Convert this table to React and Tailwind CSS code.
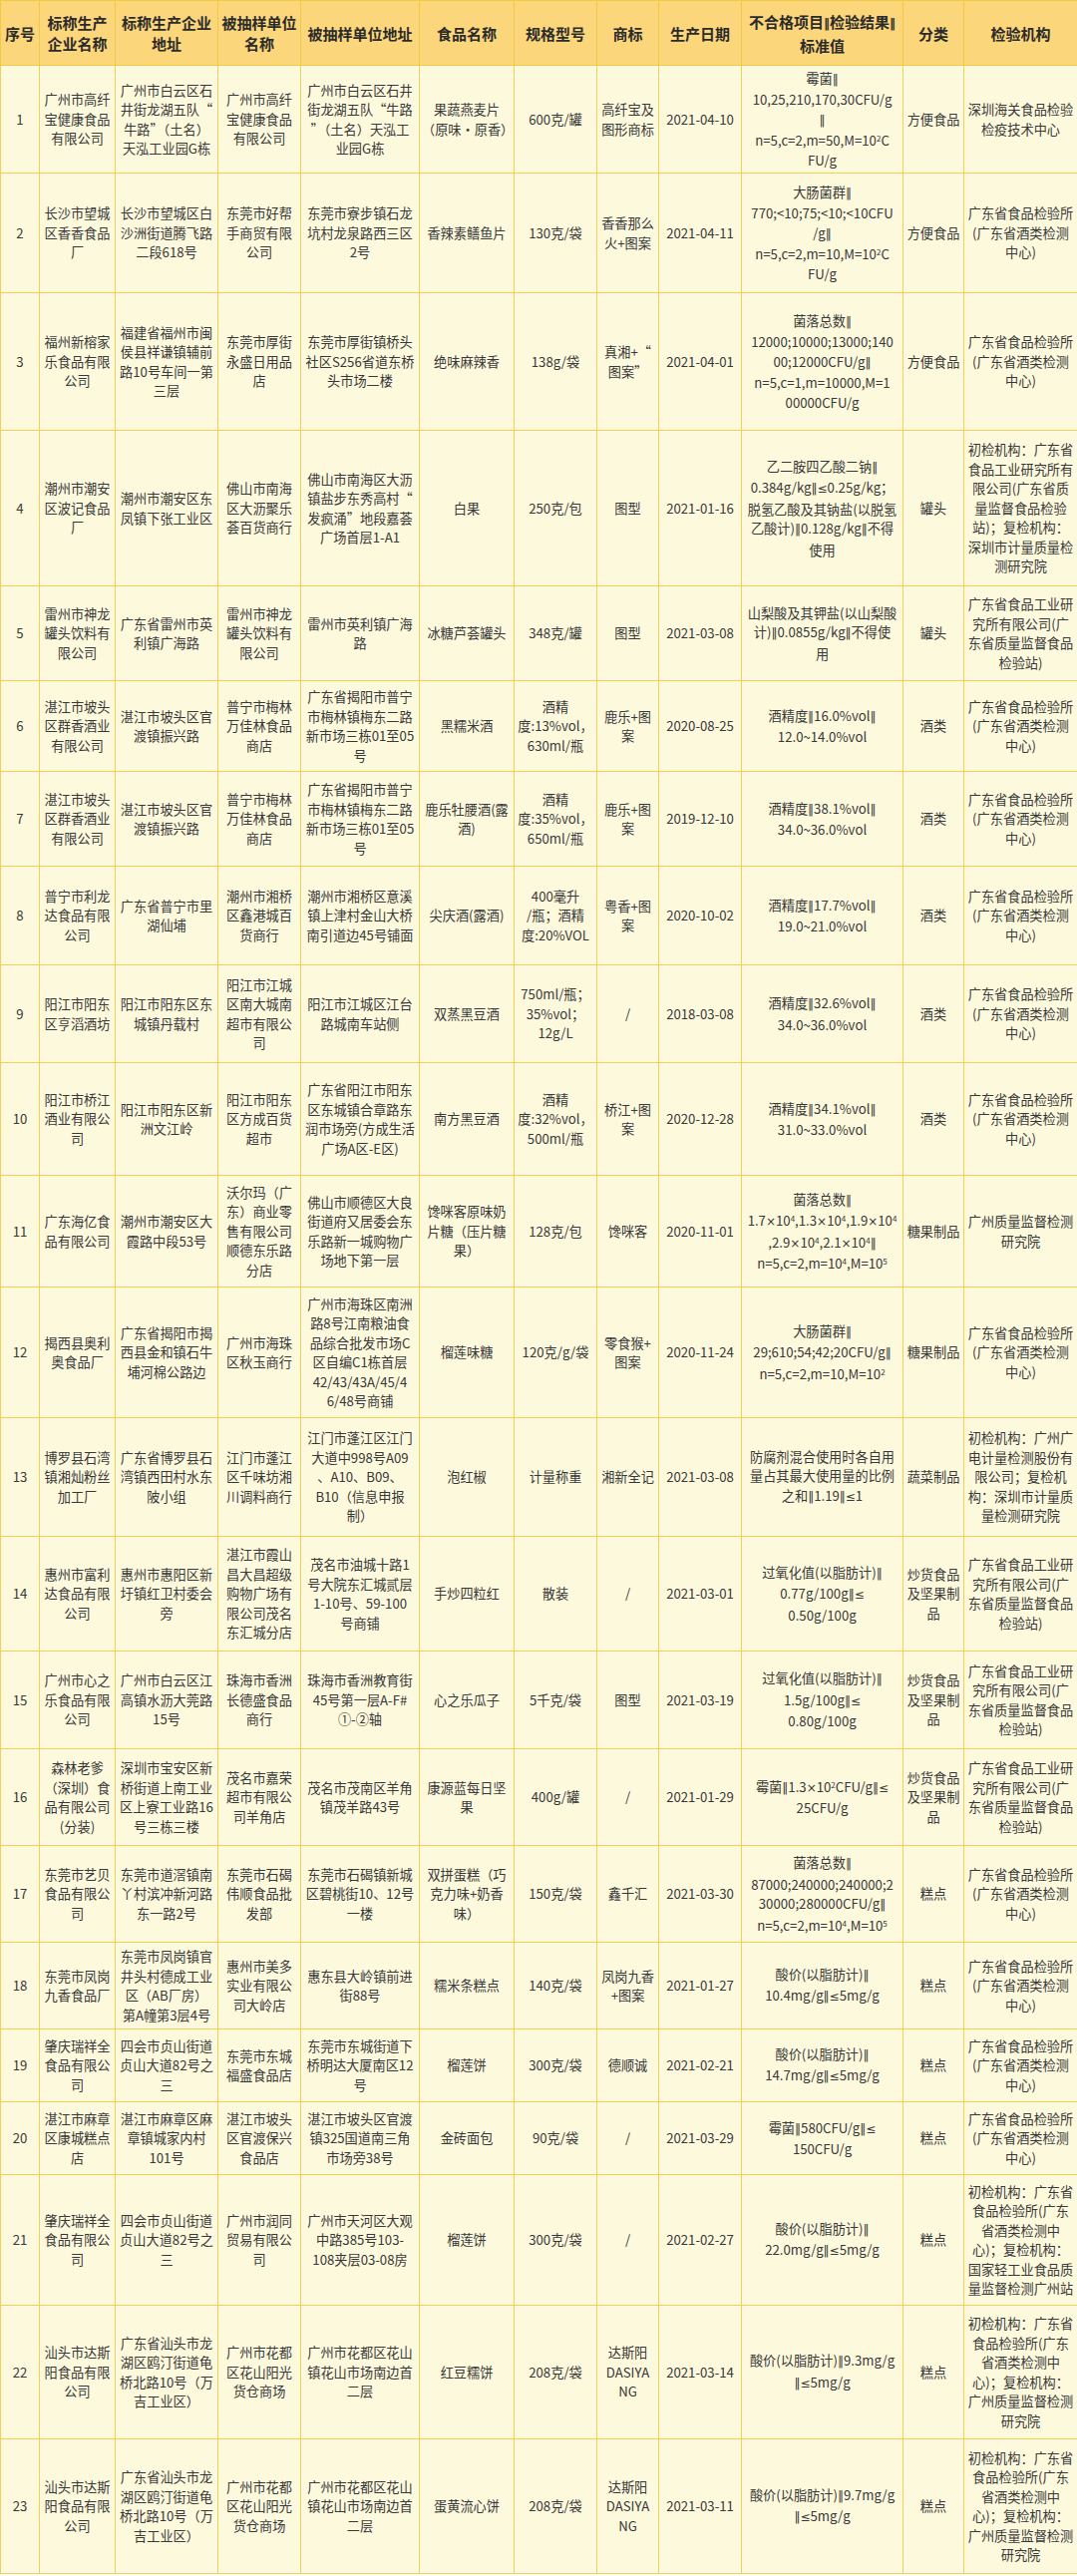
const cols = [
  'w-[39px]', 'w-[76px]', 'w-[103px]', 'w-[83px]', 'w-[119px]', 'w-[95px]',
  'w-[83px]', 'w-[62px]', 'w-[83px]', 'w-[162px]', 'w-[61px]', 'w-[114px]',
];

const head = [
  '序号', '标称生产\n企业名称', '标称生产企业\n地址', '被抽样单位\n名称', '被抽样单位地址', '食品名称',
  '规格型号', '商标', '生产日期', '不合格项目‖检验结果‖\n标准值', '分类', '检验机构',
];

const gdJy = '广东省食品检验所\n(广东省酒类检测\n中心)';
const gdGy = '广东省食品工业研\n究所有限公司(广\n东省质量监督食品\n检验站)';
const chg = '炒货食品\n及坚果制\n品';

const rows = [
  ['h-[108px]', '1', '广州市高纤\n宝健康食品\n有限公司', '广州市白云区石\n井街龙湖五队“\n牛路”（土名）\n天泓工业园G栋', '广州市高纤\n宝健康食品\n有限公司', '广州市白云区石井\n街龙湖五队“牛路\n”（土名）天泓工\n业园G栋', '果蔬燕麦片\n（原味·原香）', '600克/罐', '高纤宝及\n图形商标', '2021-04-10', '霉菌‖\n10,25,210,170,30CFU/g\n‖\nn=5,c=2,m=50,M=10^2C\nFU/g', '方便食品', '深圳海关食品检验\n检疫技术中心'],
  ['h-[120px]', '2', '长沙市望城\n区香香食品\n厂', '长沙市望城区白\n沙洲街道腾飞路\n二段618号', '东莞市好帮\n手商贸有限\n公司', '东莞市寮步镇石龙\n坑村龙泉路西三区\n2号', '香辣素鳝鱼片', '130克/袋', '香香那么\n火+图案', '2021-04-11', '大肠菌群‖\n770;<10;75;<10;<10CFU\n/g‖\nn=5,c=2,m=10,M=10^2C\nFU/g', '方便食品', gdJy],
  ['h-[138px]', '3', '福州新榕家\n乐食品有限\n公司', '福建省福州市闽\n侯县祥谦镇辅前\n路10号车间一第\n三层', '东莞市厚街\n永盛日用品\n店', '东莞市厚街镇桥头\n社区S256省道东桥\n头市场二楼', '绝味麻辣香', '138g/袋', '真湘+“\n图案”', '2021-04-01', '菌落总数‖\n12000;10000;13000;140\n00;12000CFU/g‖\nn=5,c=1,m=10000,M=1\n00000CFU/g', '方便食品', gdJy],
  ['h-[156px]', '4', '潮州市潮安\n区波记食品\n厂', '潮州市潮安区东\n凤镇下张工业区', '佛山市南海\n区大沥聚乐\n荟百货商行', '佛山市南海区大沥\n镇盐步东秀高村“\n发疯涌”地段嘉荟\n广场首层1-A1', '白果', '250克/包', '图型', '2021-01-16', '乙二胺四乙酸二钠‖\n0.384g/kg‖≤0.25g/kg；\n脱氢乙酸及其钠盐(以脱氢\n乙酸计)‖0.128g/kg‖不得\n使用', '罐头', '初检机构：广东省\n食品工业研究所有\n限公司(广东省质\n量监督食品检验\n站)；复检机构：\n深圳市计量质量检\n测研究院'],
  ['h-[95px]', '5', '雷州市神龙\n罐头饮料有\n限公司', '广东省雷州市英\n利镇广海路', '雷州市神龙\n罐头饮料有\n限公司', '雷州市英利镇广海\n路', '冰糖芦荟罐头', '348克/罐', '图型', '2021-03-08', '山梨酸及其钾盐(以山梨酸\n计)‖0.0855g/kg‖不得使\n用', '罐头', gdGy],
  ['h-[91px]', '6', '湛江市坡头\n区群香酒业\n有限公司', '湛江市坡头区官\n渡镇振兴路', '普宁市梅林\n万佳林食品\n商店', '广东省揭阳市普宁\n市梅林镇梅东二路\n新市场三栋01至05\n号', '黑糯米酒', '酒精\n度:13%vol，\n630ml/瓶', '鹿乐+图\n案', '2020-08-25', '酒精度‖16.0%vol‖\n12.0~14.0%vol', '酒类', gdJy],
  ['h-[95px]', '7', '湛江市坡头\n区群香酒业\n有限公司', '湛江市坡头区官\n渡镇振兴路', '普宁市梅林\n万佳林食品\n商店', '广东省揭阳市普宁\n市梅林镇梅东二路\n新市场三栋01至05\n号', '鹿乐牡腰酒(露\n酒)', '酒精\n度:35%vol，\n650ml/瓶', '鹿乐+图\n案', '2019-12-10', '酒精度‖38.1%vol‖\n34.0~36.0%vol', '酒类', gdJy],
  ['h-[99px]', '8', '普宁市利龙\n达食品有限\n公司', '广东省普宁市里\n湖仙埔', '潮州市湘桥\n区鑫港城百\n货商行', '潮州市湘桥区意溪\n镇上津村金山大桥\n南引道边45号铺面', '尖庆酒(露酒)', '400毫升\n/瓶；酒精\n度:20%VOL', '粤香+图\n案', '2020-10-02', '酒精度‖17.7%vol‖\n19.0~21.0%vol', '酒类', gdJy],
  ['h-[98px]', '9', '阳江市阳东\n区亨滔酒坊', '阳江市阳东区东\n城镇丹载村', '阳江市江城\n区南大城南\n超市有限公\n司', '阳江市江城区江台\n路城南车站侧', '双蒸黑豆酒', '750ml/瓶；\n35%vol；\n12g/L', '/', '2018-03-08', '酒精度‖32.6%vol‖\n34.0~36.0%vol', '酒类', gdJy],
  ['h-[113px]', '10', '阳江市桥江\n酒业有限公\n司', '阳江市阳东区新\n洲文江岭', '阳江市阳东\n区方成百货\n超市', '广东省阳江市阳东\n区东城镇合章路东\n润市场旁(方成生活\n广场A区-E区)', '南方黑豆酒', '酒精\n度:32%vol，\n500ml/瓶', '桥江+图\n案', '2020-12-28', '酒精度‖34.1%vol‖\n31.0~33.0%vol', '酒类', gdJy],
  ['h-[112px]', '11', '广东海亿食\n品有限公司', '潮州市潮安区大\n霞路中段53号', '沃尔玛（广\n东）商业零\n售有限公司\n顺德东乐路\n分店', '佛山市顺德区大良\n街道府又居委会东\n乐路新一城购物广\n场地下第一层', '馋咪客原味奶\n片糖（压片糖\n果）', '128克/包', '馋咪客', '2020-11-01', '菌落总数‖\n1.7×10^4,1.3×10^4,1.9×10^4\n,2.9×10^4,2.1×10^4‖\nn=5,c=2,m=10^4,M=10^5', '糖果制品', '广州质量监督检测\n研究院'],
  ['h-[131px]', '12', '揭西县奥利\n奥食品厂', '广东省揭阳市揭\n西县金和镇石牛\n埔河棉公路边', '广州市海珠\n区秋玉商行', '广州市海珠区南洲\n路8号江南粮油食\n品综合批发市场C\n区自编C1栋首层\n42/43/43A/45/4\n6/48号商铺', '榴莲味糖', '120克/g/袋', '零食猴+\n图案', '2020-11-24', '大肠菌群‖\n29;610;54;42;20CFU/g‖\nn=5,c=2,m=10,M=10^2', '糖果制品', gdJy],
  ['h-[119px]', '13', '博罗县石湾\n镇湘灿粉丝\n加工厂', '广东省博罗县石\n湾镇西田村水东\n陂小组', '江门市蓬江\n区千味坊湘\n川调料商行', '江门市蓬江区江门\n大道中998号A09\n、A10、B09、\nB10（信息申报\n制）', '泡红椒', '计量称重', '湘新全记', '2021-03-08', '防腐剂混合使用时各自用\n量占其最大使用量的比例\n之和‖1.19‖≤1', '蔬菜制品', '初检机构：广州广\n电计量检测股份有\n限公司；复检机\n构：深圳市计量质\n量检测研究院'],
  ['h-[115px]', '14', '惠州市富利\n达食品有限\n公司', '惠州市惠阳区新\n圩镇红卫村委会\n旁', '湛江市霞山\n昌大昌超级\n购物广场有\n限公司茂名\n东汇城分店', '茂名市油城十路1\n号大院东汇城贰层\n1-10号、59-100\n号商铺', '手炒四粒红', '散装', '/', '2021-03-01', '过氧化值(以脂肪计)‖\n0.77g/100g‖≤\n0.50g/100g', chg, gdGy],
  ['h-[98px]', '15', '广州市心之\n乐食品有限\n公司', '广州市白云区江\n高镇水沥大莞路\n15号', '珠海市香洲\n长德盛食品\n商行', '珠海市香洲教育街\n45号第一层A-F#\n①-②轴', '心之乐瓜子', '5千克/袋', '图型', '2021-03-19', '过氧化值(以脂肪计)‖\n1.5g/100g‖≤\n0.80g/100g', chg, gdGy],
  ['h-[97px]', '16', '森林老爹\n（深圳）食\n品有限公司\n(分装)', '深圳市宝安区新\n桥街道上南工业\n区上寮工业路16\n号三栋三楼', '茂名市嘉荣\n超市有限公\n司羊角店', '茂名市茂南区羊角\n镇茂羊路43号', '康源蓝每日坚\n果', '400g/罐', '/', '2021-01-29', '霉菌‖1.3×10^2CFU/g‖≤\n25CFU/g', chg, gdGy],
  ['h-[97px]', '17', '东莞市艺贝\n食品有限公\n司', '东莞市道滘镇南\n丫村滨冲新河路\n东一路2号', '东莞市石碣\n伟顺食品批\n发部', '东莞市石碣镇新城\n区碧桃街10、12号\n一楼', '双拼蛋糕（巧\n克力味+奶香\n味）', '150克/袋', '鑫千汇', '2021-03-30', '菌落总数‖\n87000;240000;240000;2\n30000;280000CFU/g‖\nn=5,c=2,m=10^4,M=10^5', '糕点', gdJy],
  ['h-[87px]', '18', '东莞市凤岗\n九香食品厂', '东莞市凤岗镇官\n井头村德成工业\n区（AB厂房）\n第A幢第3层4号', '惠州市美多\n实业有限公\n司大岭店', '惠东县大岭镇前进\n街88号', '糯米条糕点', '140克/袋', '凤岗九香\n+图案', '2021-01-27', '酸价(以脂肪计)‖\n10.4mg/g‖≤5mg/g', '糕点', gdJy],
  ['h-[73px]', '19', '肇庆瑞祥全\n食品有限公\n司', '四会市贞山街道\n贞山大道82号之\n三', '东莞市东城\n福盛食品店', '东莞市东城街道下\n桥明达大厦南区12\n号', '榴莲饼', '300克/袋', '德顺诚', '2021-02-21', '酸价(以脂肪计)‖\n14.7mg/g‖≤5mg/g', '糕点', gdJy],
  ['h-[73px]', '20', '湛江市麻章\n区康城糕点\n店', '湛江市麻章区麻\n章镇城家内村\n101号', '湛江市坡头\n区官渡保兴\n食品店', '湛江市坡头区官渡\n镇325国道南三角\n市场旁38号', '金砖面包', '90克/袋', '/', '2021-03-29', '霉菌‖580CFU/g‖≤\n150CFU/g', '糕点', gdJy],
  ['h-[131px]', '21', '肇庆瑞祥全\n食品有限公\n司', '四会市贞山街道\n贞山大道82号之\n三', '广州市润同\n贸易有限公\n司', '广州市天河区大观\n中路385号103-\n108夹层03-08房', '榴莲饼', '300克/袋', '/', '2021-02-27', '酸价(以脂肪计)‖\n22.0mg/g‖≤5mg/g', '糕点', '初检机构：广东省\n食品检验所(广东\n省酒类检测中\n心)；复检机构：\n国家轻工业食品质\n量监督检测广州站'],
  ['h-[134px]', '22', '汕头市达斯\n阳食品有限\n公司', '广东省汕头市龙\n湖区鸥汀街道龟\n桥北路10号（万\n吉工业区）', '广州市花都\n区花山阳光\n货仓商场', '广州市花都区花山\n镇花山市场南边首\n二层', '红豆糯饼', '208克/袋', '达斯阳\nDASIYA\nNG', '2021-03-14', '酸价(以脂肪计)‖9.3mg/g\n‖≤5mg/g', '糕点', '初检机构：广东省\n食品检验所(广东\n省酒类检测中\n心)；复检机构：\n广州质量监督检测\n研究院'],
  ['h-[135px]', '23', '汕头市达斯\n阳食品有限\n公司', '广东省汕头市龙\n湖区鸥汀街道龟\n桥北路10号（万\n吉工业区）', '广州市花都\n区花山阳光\n货仓商场', '广州市花都区花山\n镇花山市场南边首\n二层', '蛋黄流心饼', '208克/袋', '达斯阳\nDASIYA\nNG', '2021-03-11', '酸价(以脂肪计)‖9.7mg/g\n‖≤5mg/g', '糕点', '初检机构：广东省\n食品检验所(广东\n省酒类检测中\n心)；复检机构：\n广州质量监督检测\n研究院'],
];

// "10^4" -> superscript; ‖ × ≤ set in a narrow western font like the original
const renderText = (text) =>
  text.split(/(\^\d+|[‖×≤])/).map((part, i) => {
    if (part.startsWith('^')) {
      return (
        <sup key={i} className="text-[8px] leading-none">{part.slice(1)}</sup>
      );
    }
    if (part === '‖' || part === '×' || part === '≤') {
      return (
        <span key={i} className="font-['DejaVu_Sans',sans-serif] text-[12px]">{part}</span>
      );
    }
    return part;
  });

export default function App() {
  return (
    <div className="w-[1080px] bg-[#fdf9dd] font-['Noto_Sans_CJK_SC','Noto_Sans',sans-serif] text-[#383838]">
      <table className="w-[1080px] table-fixed border-collapse">
        <colgroup>
          {cols.map((c, i) => (
            <col key={i} className={c} />
          ))}
        </colgroup>
        <thead>
          <tr className="h-[65px] bg-[#fcd67a]">
            {head.map((h, i) => (
              <th
                key={i}
                className="border border-[#f2c944] px-[2px] text-center align-middle text-[15px] font-bold leading-[21px] text-[#2b2b2b] whitespace-pre"
              >
                {renderText(h)}
              </th>
            ))}
          </tr>
        </thead>
        <tbody>
          {rows.map(([height, ...cells], r) => (
            <tr key={r} className={height}>
              {cells.map((cell, i) => (
                <td
                  key={i}
                  className="border border-[#f2cf55] px-[2px] text-center align-middle text-[13.2px] leading-[19.5px] whitespace-pre"
                >
                  {renderText(cell)}
                </td>
              ))}
            </tr>
          ))}
        </tbody>
      </table>
    </div>
  );
}
